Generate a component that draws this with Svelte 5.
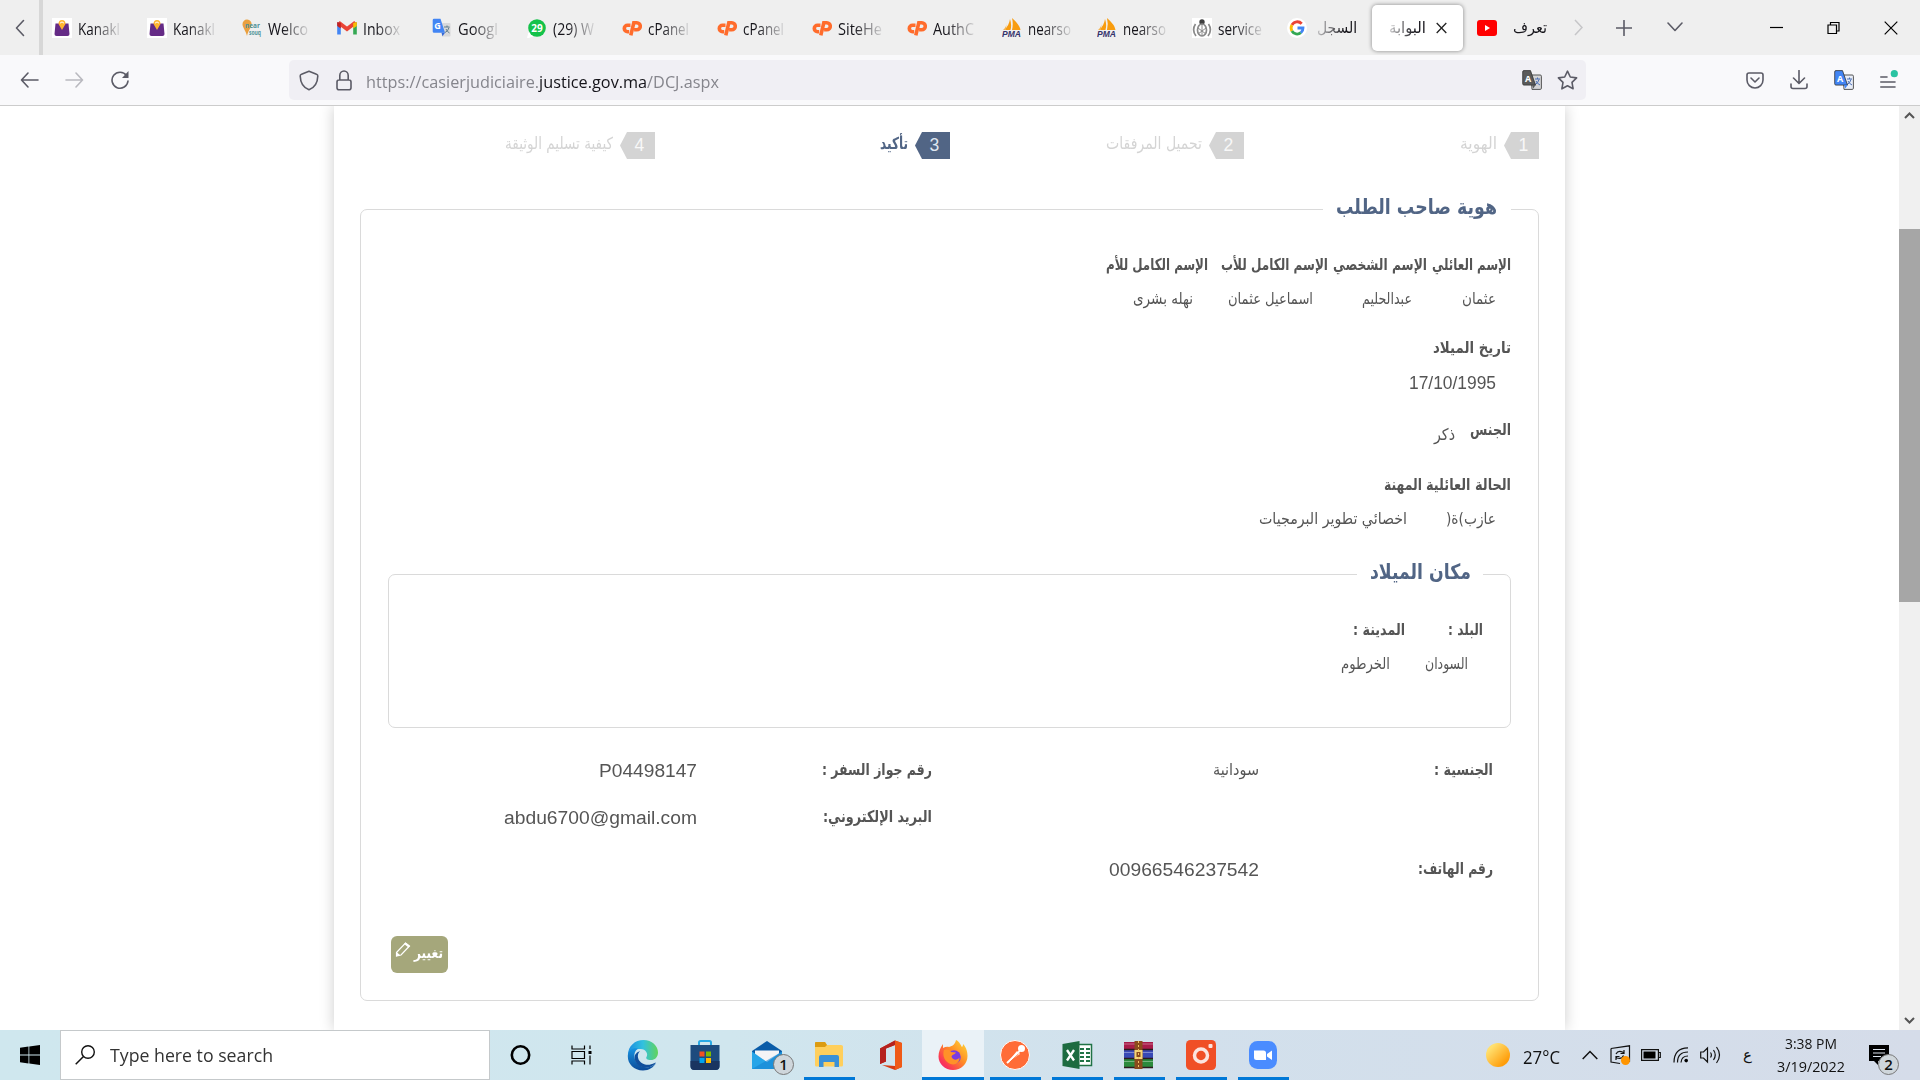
<script>
  // Stretches a line of text horizontally so it fills the given width.
  function fit(node, width) {
    const natural = node.getBoundingClientRect().width;
    if (natural > 0) {
      node.style.transform = `scaleX(${width / natural})`;
      node.style.marginRight = `${width - natural}px`;
    }
  }

  const tabs = [
    { icon: 'bag', title: 'Kanakl', w: 42 },
    { icon: 'bag', title: 'Kanakl', w: 42 },
    { icon: 'near', title: 'Welco', w: 40 },
    { icon: 'gmail', title: 'Inbox', w: 37 },
    { icon: 'translate', title: 'Googl', w: 40 },
    { icon: 'whatsapp', title: '(29) W', w: 41 },
    { icon: 'cp', title: 'cPanel', w: 41 },
    { icon: 'cp', title: 'cPanel', w: 41 },
    { icon: 'cp', title: 'SiteHe', w: 44 },
    { icon: 'cp', title: 'AuthC', w: 41 },
    { icon: 'pma', title: 'nearso', w: 43 },
    { icon: 'pma', title: 'nearso', w: 43 },
    { icon: 'crest', title: 'service', w: 44 }
  ];

  const steps = [
    { n: 1, label: 'الهوية', w: 37 },
    { n: 2, label: 'تحميل المرفقات', w: 96 },
    { n: 3, label: 'تأكيد', w: 28, active: true },
    { n: 4, label: 'كيفية تسليم الوثيقة', w: 108 }
  ];

  const names = [
    { label: 'الإسم العائلي', lw: 79, value: 'عثمان', vw: 34 },
    { label: 'الإسم الشخصي', lw: 94, value: 'عبدالحليم', vw: 50 },
    { label: 'الإسم الكامل للأب', lw: 107, value: 'اسماعيل عثمان', vw: 85 },
    { label: 'الإسم الكامل للأم', lw: 102, value: 'نهله بشرى', vw: 60 }
  ];

  const status = [
    { label: 'الحالة العائلية', lw: 85, value: 'عازب)ة(', vw: 50 },
    { label: 'المهنة', lw: 38, value: 'اخصائي تطوير البرمجيات', vw: 148 }
  ];

  const birth = [
    { label: 'البلد :', lw: 35, value: 'السودان', vw: 43 },
    { label: 'المدينة :', lw: 52, value: 'الخرطوم', vw: 49 }
  ];

  const apps = [
    { id: 'edge' },
    { id: 'store' },
    { id: 'mail' },
    { id: 'files', open: true },
    { id: 'office' },
    { id: 'firefox', open: true, active: true },
    { id: 'postman', open: true },
    { id: 'excel', open: true },
    { id: 'winrar', open: true },
    { id: 'recorder', open: true },
    { id: 'zoom', open: true }
  ];
</script>

{#snippet line(text, w, cls)}
  <span class="line {cls}" style:width="{w}px"><span class="ink" dir="auto" use:fit={w}>{text}</span></span>
{/snippet}

{#snippet translateIcon(front, back)}
  <svg width="20" height="20" viewBox="0 0 20 20">
    <path d="M9 5h9.2a1.2 1.2 0 0 1 1.2 1.2v12a1.2 1.2 0 0 1-1.2 1.2H10z" fill={back} stroke="#555" stroke-width="1" />
    <path d="M13 9h5M15.5 7.500v1.500M17 9.500q-1 4-4 5M14 11q1 2.500 4 4" fill="none" stroke="#4b6fb5" stroke-width="1" />
    <path d="M2 .6h6.500l5 14.500H2A1.300 1.300 0 0 1 .7 13.800V2A1.300 1.300 0 0 1 2 .6z" fill={front} stroke="#333" stroke-width=".8" />
    <path d="M10 15.100h3.600l-2.200 3.500z" fill={front} />
    <text x="3" y="11.500" class="mini">A</text>
  </svg>
{/snippet}

{#snippet tabIcon(id)}
  <svg class="fav" width="20" height="20" viewBox="0 0 20 20">
    {#if id === 'bag'}
      <rect width="20" height="20" fill="#fff" />
      <path d="M3.500 5.500h13L17.500 16q0 2-2 2h-11q-2 0-2-2z" fill="#652b86" />
      <path d="M6.500 6a3.500 4 0 0 1 7 0l-3.500 6z" fill="#ffb52e" />
      <path d="M8 5.200q2-2.600 4 0" fill="none" stroke="#fff" />
    {:else if id === 'near'}
      <path d="M5 1.500a4.500 4.500 0 0 0-4.500 4.700C.5 9.500 4 13 5 18c1-5 4-8 4.500-11A4.500 4.500 0 0 0 5 1.500z" fill="#eaa03e" />
      <text x="3" y="9.500" class="near">near</text>
      <text x="7" y="17" class="near" textLength="12" lengthAdjust="spacingAndGlyphs">souq</text>
    {:else if id === 'gmail'}
      <path d="M2 4.500v12" stroke="#4285f4" stroke-width="3.600" />
      <path d="M18 4.500v12" stroke="#34a853" stroke-width="3.600" />
      <path d="M1.500 4.500 10 11l8.500-6.500" fill="none" stroke="#ea4335" stroke-width="4" />
      <path d="M.2 4v4l3.600 2.500V5z" fill="#c5221f" />
      <path d="M19.800 4v4l-3.600 2.500V5z" fill="#fbbc04" />
    {:else if id === 'translate'}
      <path d="M9 5h8.500a1 1 0 0 1 1 1v11.500a1 1 0 0 1-1 1H10z" fill="#d8d8da" />
      <path d="M12 9h5.500M15 7.500V9M17 9.500q-1 4-4 5M14 11q1 2.500 3.500 4" fill="none" stroke="#607d8b" />
      <path d="M2 .8h6.500l4.500 14H2a1.300 1.300 0 0 1-1.300-1.300V2A1.300 1.300 0 0 1 2 .8z" fill="#4285f4" />
      <path d="M9.500 14.800H13l-2.500 3.500z" fill="#3367d6" />
      <text x="2.200" y="11" class="mini">G</text>
    {:else if id === 'whatsapp'}
      <path d="M.5 19.800 2 14.500 6.500 18z" fill="#fff" stroke="#fff" />
      <circle cx="10" cy="10" r="8.800" fill="#14c24a" />
      <text x="4.300" y="13.600" class="wa">29</text>
    {:else if id === 'cp'}
      <g fill="none" stroke="#ff6c2c" stroke-width="3.600">
        <path d="M8.500 7.300H5.500a3.200 3.200 0 0 0 0 6.400h1.700" />
        <path d="M8.800 17.300 11.800 4.800h3a3.500 3.500 0 0 1 0 7h-2.700" />
      </g>
    {:else if id === 'pma'}
      <path d="M8 1q2 6 .5 11H2q5-4 6-11zM10 0q8 7 8.500 12H10q1.500-6 0-12z" fill="#f89c0e" />
      <path d="M4.500 5q0 4-3.500 7h3z" fill="#f6b34c" />
      <text x="0" y="19" class="pma">PMA</text>
    {:else if id === 'crest'}
      <rect width="20" height="20" fill="#fff" />
      <circle cx="10" cy="4" r="2.700" fill="#3f3f3f" />
      <g fill="none" stroke="#8a8a8a">
        <ellipse cx="10" cy="12" rx="4.500" ry="6" stroke-width="1.700" />
        <path d="M10 6v12M6 10l8 6M14 10l-8 6" />
        <path d="M3.500 6q-4 6 .5 12M16.500 6q4 6-.5 12" stroke-width="1.700" />
      </g>
    {/if}
  </svg>
{/snippet}

{#snippet appIcon(id)}
  <svg width="32" height="32" viewBox="0 0 32 32">
    {#if id === 'edge'}
      <defs>
        <linearGradient id="edgeTop" x1="0" x2="1"><stop offset="0" stop-color="#1c8de0" /><stop offset=".5" stop-color="#32c1df" /><stop offset="1" stop-color="#62d45a" /></linearGradient>
        <linearGradient id="edgeLow" x1="0" x2="0" y1="0" y2="1"><stop offset="0" stop-color="#1793e0" /><stop offset="1" stop-color="#0c4a98" /></linearGradient>
      </defs>
      <path d="M1 16C1 7 8 1 16.500 1 25 1 31 7 31 13.500c0 5-3.500 7.500-7 7.500-4 0-5.500-1.500-4.500-3 2-3-.5-8-6-8C7 10 2.500 12.500 1 18z" fill="url(#edgeTop)" />
      <path d="M.8 17C1 11 6 8.500 11 9.500c-3 2-4 5-3.500 9 .8 6 7 11 15 9.500q4-1 6.500-4c-2 4-7 7.500-13 7.500C7 31.500.6 25 .8 17z" fill="url(#edgeLow)" />
      <path d="M13 12c-3 3-3 8 1 11.500 4 3 9 3 13.500.5l1.500-.5c-2 3-6 5-10 5C11 28.500 6 22 8 16q1.500-3 5-4z" fill="#114f9c" />
    {:else if id === 'store'}
      <path d="M10 8V3.500q0-1.500 1.500-1.500h9Q22 2 22 3.500V8" fill="none" stroke="#29a9e5" stroke-width="2" />
      <path d="M1.500 6h29v21q0 4-4 4h-21q-4 0-4-4z" fill="#1d4b7e" />
      <path d="M1.500 22h29v5q0 4-4 4h-21q-4 0-4-4z" fill="#1a3560" />
      <path d="M10.500 12.500h5v5h-5z" fill="#f25022" /><path d="M17 12.500h5v5h-5z" fill="#7fba00" />
      <path d="M10.500 19h5v5h-5z" fill="#00a4ef" /><path d="M17 19h5v5h-5z" fill="#ffb900" />
    {:else if id === 'mail'}
      <path d="M1 12 16 2l15 10v18H1z" fill="#0a5ca8" />
      <path d="M4 11.500h24V20l-12 5-12-5z" fill="#f4f4f6" />
      <path d="M1 12.500 16 23l15-10.500V30H1z" fill="#27a5e8" />
      <path d="M1 30 31 12.500V30z" fill="#1684d2" opacity=".6" />
    {:else if id === 'files'}
      <path d="M2 4q0-1 1-1h9l2 3h14q2 0 2 1.500V26q0 1.500-1.500 1.500h-25Q2 27.500 2 26z" fill="#ffcf5c" />
      <path d="M2 4q0-1 1-1h9l2 3-2 2H2z" fill="#dc9b11" />
      <path d="M6 28V18q0-2 2-2h16q2 0 2 2v10h-4.500v-5h-11v5z" fill="#3a91d8" />
    {:else if id === 'office'}
      <path d="M5 9.500 20 1.500l7 2.500v24l-7 3-13-5 13 1V6l-9 3.500v13L5 25z" fill="#d83b12" />
      <path d="M20 1.500 27 4v24l-7 3z" fill="#ef5a17" />
      <path d="M5 9.500 20 1.500V6l-9 3.500v13L5 25z" fill="#b5221f" />
    {:else if id === 'firefox'}
      <defs>
        <linearGradient id="foxBody" x1="1" x2="0" y1="0" y2="1"><stop offset="0" stop-color="#ffdf3a" /><stop offset=".45" stop-color="#ff8a26" /><stop offset=".8" stop-color="#fa3359" /><stop offset="1" stop-color="#e42585" /></linearGradient>
      </defs>
      <path d="M19 1c4 2 5 6 6 7 1-1 1-2 1-3 4 4 4.500 9 4.500 12 0 8-6.500 14-14.500 14S1.500 25 1.500 17.500c0-5 2-9 4.500-12.500v4c2-1 4-1.500 6-1 4-1 6-3 7-7z" fill="url(#foxBody)" />
      <circle cx="17" cy="18" r="6.800" fill="#7a3be2" />
      <path d="M7 11c4-1 6 0 7 2l5 .5c-1 2-4 2-4.500 4 1 4 6 4 8 1 0 6-5 8-9 6.500C8 23 5 17 7 11z" fill="#ff9128" />
    {:else if id === 'postman'}
      <circle cx="16" cy="16" r="14.500" fill="#ff6c37" stroke="#fff" />
      <path d="M8 24 18 12l3 3z" fill="#fff" />
      <path d="m8 24 11-10M18.500 14.500l4-5" stroke="#fff" stroke-width="2" />
      <circle cx="22.500" cy="9.500" r="3.500" fill="#fff" />
      <path d="m11 23 8.500-8" stroke="#ff6c37" />
    {:else if id === 'excel'}
      <path d="M17 5.500h13.500v21H17z" fill="#fff" stroke="#217346" stroke-width="1.500" />
      <path d="M19 10h4M25 10h4M19 14h4M25 14h4M19 18h4M25 18h4M19 22h4M25 22h4" stroke="#217346" stroke-width="2" />
      <path d="M1.500 5 18.500 2v28L1.500 27z" fill="#1d6b40" />
      <path d="m6 11 7 10.500M13 11 6 21.500" stroke="#fff" stroke-width="2.300" />
    {:else if id === 'winrar'}
      <path d="M1 3h29v8H1z" fill="#a81b4a" /><path d="M1 11h29v9H1z" fill="#3849b5" /><path d="M1 20h29v9H1z" fill="#2b8a3c" />
      <path d="M1 5h29M1 13.500h29M1 22.500h29" stroke="#fff" opacity=".35" />
      <path d="M1 10.500h29M1 19.500h29M1 28.500h29" stroke="#2c1a1f" stroke-width="1.300" />
      <path d="M11.500 2h8v28h-8z" fill="#8a4b1d" /><path d="M12.500 12h6v7h-6z" fill="none" stroke="#f4d576" stroke-width="2" />
      <path d="M15.500 2v28" stroke="#f0c060" stroke-dasharray="2 2" />
    {:else if id === 'recorder'}
      <rect x="1" y="1" width="30" height="30" rx="4.500" fill="#f04f26" />
      <circle cx="16" cy="16.500" r="6.500" fill="none" stroke="#fbe4df" stroke-width="3.500" />
      <rect x="23.500" y="5" width="4" height="4" rx="1" fill="#fbe4df" />
    {:else if id === 'zoom'}
      <rect x="2" y="2" width="28" height="28" rx="8.500" fill="#4a8cff" />
      <path d="M7 11.500h9.500q2.500 0 2.500 2.500v7H9.500Q7 21 7 18.500zM20 15l5-3.500v9.500l-5-3.500z" fill="#fff" />
    {/if}
  </svg>
{/snippet}

<div class="screen">
  <header class="tabbar">
    <div class="scroll-left">
      <svg width="10" height="18" viewBox="0 0 10 18"><path d="M8.500 1.500 1.500 9l7 7.500" class="stroke" /></svg>
    </div>
    <div class="tabs">
      {#each tabs as tab}
        <div class="tab">
          {@render tabIcon(tab.icon)}
          <span class="fade">{@render line(tab.title, tab.w, 'ui')}</span>
        </div>
      {/each}
    </div>
    <div class="tab google">
      <svg width="20" height="20" viewBox="0 0 20 20">
        <circle cx="10" cy="10" r="10" fill="#fff" />
        <g fill="none" stroke-width="2.800">
          <path d="M14.700 5.800A6 6 0 0 0 4.900 7" stroke="#ea4335" />
          <path d="M4.900 7a6.300 6.300 0 0 0 0 6" stroke="#fbbc05" />
          <path d="M4.900 13a6 6 0 0 0 9 1.700" stroke="#34a853" />
          <path d="M13.900 14.700A6 6 0 0 0 16 10h-5.500" stroke="#4285f4" />
        </g>
      </svg>
      <span class="fade-rtl">{@render line('السجل', 40, 'tab-ar')}</span>
    </div>
    <div class="active-tab">
      <span class="fade-rtl">{@render line('البوابة', 37, 'tab-ar')}</span>
      <svg width="11" height="12" viewBox="0 0 11 12"><path d="m.7 1 9.600 10M10.300 1 .7 11" stroke="#222" stroke-width="1.300" /></svg>
    </div>
    <div class="tab youtube">
      <svg width="20" height="18" viewBox="0 0 20 18"><rect y="1" width="20" height="16" rx="3" fill="#f00" /><path d="m8 6 5 3-5 3z" fill="#fff" /></svg>
      {@render line('تعرف', 34, 'tab-ar')}
    </div>
    <div class="strip-tools">
      <svg width="9" height="17" viewBox="0 0 9 17"><path d="m1 1 7 7.500L1 16" fill="none" stroke="#c6c6c8" stroke-width="1.500" /></svg>
      <svg class="plus" width="16" height="16" viewBox="0 0 16 16"><path d="M8 .5v15M.5 8h15" class="stroke" /></svg>
      <svg class="more" width="16" height="10" viewBox="0 0 16 10"><path d="m1 1 7 7.500L15 1" class="stroke" /></svg>
    </div>
    <div class="window-tools">
      <svg width="14" height="14" viewBox="0 0 14 14"><path d="M0 6.500h13" stroke="#000" stroke-width="1.200" /></svg>
      <svg width="14" height="14" viewBox="0 0 14 14"><path d="M1 4h8.500v8.500H1zM3.500 4V1.500H12V10H9.500" fill="none" stroke="#000" stroke-width="1.200" /></svg>
      <svg width="14" height="14" viewBox="0 0 14 14"><path d="m.7.7 12.600 12.600M13.300.7.7 13.300" stroke="#000" stroke-width="1.200" /></svg>
    </div>
  </header>

  <nav class="toolbar">
    <div class="nav-icons">
      <svg width="19" height="18" viewBox="0 0 19 18"><path d="M18 9H1.500M8 2 1.500 9 8 16" class="stroke" /></svg>
      <svg class="dim" width="19" height="18" viewBox="0 0 19 18"><path d="M1 9h16.500M11 2l6.500 7-6.500 7" class="stroke" /></svg>
      <svg width="20" height="20" viewBox="0 0 20 20"><path d="M16.500 5.500A8 8 0 1 0 18 11" class="stroke" /><path d="M18.500 1v7H12z" fill="#5b5b66" /></svg>
    </div>
    <div class="urlbar">
      <svg width="20" height="21" viewBox="0 0 20 21"><path d="M10 1.200 2.500 4.200Q1.200 4.600 1.200 6C1.400 12.500 4 17.500 10 19.800c6-2.300 8.600-7.300 8.800-13.800q0-1.400-1.300-1.800z" class="stroke" /></svg>
      <svg class="lock" width="16" height="21" viewBox="0 0 16 21"><path d="M3.800 10V5.500a4.200 4.500 0 0 1 8.400 0V10M3 10h10a2 2 0 0 1 2 2v5.700a2 2 0 0 1-2 2H3a2 2 0 0 1-2-2V12a2 2 0 0 1 2-2z" class="stroke" /></svg>
      <span class="line url" style:width="353px"><span class="ink" use:fit={353}>https://casierjudiciaire.<b>justice.gov.ma</b>/DCJ.aspx</span></span>
      <span class="url-actions">
        {@render translateIcon('#5a5a5a', '#d4d4d6')}
        <svg width="21" height="20" viewBox="0 0 21 20"><path d="m10.500 1.200 2.800 5.800 6.300.9-4.600 4.500 1.100 6.400-5.600-3-5.600 3L6 12.400 1.400 7.900l6.300-.9z" class="stroke" /></svg>
      </span>
    </div>
    <div class="ext-icons">
      <svg width="18" height="17" viewBox="0 0 18 17"><path d="M3 1h12a2 2 0 0 1 2 2v5a8 8 0 0 1-16 0V3a2 2 0 0 1 2-2zM5 6l4 4 4-4" class="stroke" /></svg>
      <svg width="18" height="20" viewBox="0 0 18 20"><path d="M9 .5V13M3.500 8 9 13.500 14.500 8M1 14v2.500q0 2 2 2h12q2 0 2-2V14" class="stroke" /></svg>
      {@render translateIcon('#4285f4', '#e9eef8')}
      <svg width="18" height="20" viewBox="0 0 18 20"><path d="M.8 7H7M.8 12H15M.8 17H15" class="stroke" /><circle cx="14.300" cy="3.700" r="3.600" fill="#2ac3a2" /></svg>
    </div>
  </nav>

  <div class="viewport">
    <main class="page" dir="rtl">
      <ol class="steps">
        {#each steps as step}
          <li class:current={step.active}>
            <span class="flag">{step.n}</span>
            {@render line(step.label, step.w, 'step-label')}
          </li>
        {/each}
      </ol>

      <fieldset class="owner">
        <legend>{@render line('هوية صاحب الطلب', 161, 'title')}</legend>

        <div class="grid names">
          {#each names as f}<div>{@render line(f.label, f.lw, 'label')}</div>{/each}
          {#each names as f}<div class="value">{@render line(f.value, f.vw, 'val')}</div>{/each}
        </div>

        <div class="date">
          <div class="row">{@render line('تاريخ الميلاد', 78, 'label')}</div>
          <div class="row value">{@render line('17/10/1995', 87, 'num')}</div>
        </div>

        <div class="row gender">
          {@render line('الجنس', 41, 'label')}
          {@render line('ذكر', 21, 'val lower')}
        </div>

        <div class="grid status">
          {#each status as f}<div>{@render line(f.label, f.lw, 'label')}</div>{/each}
          {#each status as f}<div class="value">{@render line(f.value, f.vw, 'val')}</div>{/each}
        </div>

        <fieldset class="birth">
          <legend>{@render line('مكان الميلاد', 101, 'title')}</legend>
          <div class="grid place">
            {#each birth as f}<div>{@render line(f.label, f.lw, 'label')}</div>{/each}
            {#each birth as f}<div class="value">{@render line(f.value, f.vw, 'val')}</div>{/each}
          </div>
        </fieldset>

        <div class="contact first">
          <div>{@render line('الجنسية :', 59, 'label')}</div>
          <div>{@render line('سودانية', 46, 'val')}</div>
          <div>{@render line('رقم جواز السفر :', 110, 'label')}</div>
          <div>{@render line('P04498147', 98, 'num big')}</div>
        </div>
        <div class="contact second">
          <div></div>
          <div></div>
          <div>{@render line('البريد الإلكتروني:', 109, 'label')}</div>
          <div>{@render line('abdu6700@gmail.com', 193, 'num big')}</div>
        </div>
        <div class="contact third">
          <div>{@render line('رقم الهاتف:', 75, 'label')}</div>
          <div>{@render line('00966546237542', 150, 'num big')}</div>
        </div>

        <div class="actions">
          <button type="button">
            {@render line('تغيير', 29, 'btn-text')}
            <svg width="16" height="16" viewBox="0 0 16 16"><path d="M1.500 11.500 10.500 2l4 3-8.500 9-4.500 1z" fill="none" stroke="#fff" stroke-width="1.200" /><path d="m10.500 1.500 4.500 3.500-1.500 1.500L9 3zM1.500 11l3.500 3-4 1.500z" fill="#fff" /></svg>
          </button>
        </div>
      </fieldset>
    </main>

    <div class="scrollbar">
      <svg width="11" height="7" viewBox="0 0 11 7"><path d="m1 6 4.500-4.500L10 6" fill="none" stroke="#555" stroke-width="2" /></svg>
      <div class="thumb"></div>
      <svg width="11" height="7" viewBox="0 0 11 7"><path d="m1 1 4.500 4.500L10 1" fill="none" stroke="#555" stroke-width="2" /></svg>
    </div>
  </div>

  <footer class="taskbar">
    <div class="start">
      <svg width="20" height="20" viewBox="0 0 20 20"><path d="M0 2.800 8.500 1.600v8H0zM9.300 1.500 20 0v9.600H9.300zM0 10.400h8.500v8L0 17.200zM9.300 10.400H20V20L9.300 18.500z" /></svg>
    </div>
    <div class="search">
      <svg width="20" height="20" viewBox="0 0 20 20"><circle cx="13" cy="7" r="6.300" fill="none" stroke="#111" stroke-width="1.400" /><path d="M8.500 11.500.7 19.300" stroke="#111" stroke-width="1.500" /></svg>
      {@render line('Type here to search', 163, 'search-text')}
    </div>
    <div class="app narrow"><svg width="22" height="22" viewBox="0 0 22 22"><circle cx="10.500" cy="11" r="8.700" fill="none" stroke="#000" stroke-width="2.600" /></svg></div>
    <div class="app narrow"><svg width="22" height="20" viewBox="0 0 22 20"><path d="M1 .5V4h12.500V.5M1 6.500h12.500v7H1zM1 19.500V16h12.500v3.500M19 .5V4M19 10.500v9" fill="none" stroke="#000" stroke-width="1.200" /><path d="M17.500 6h3v3h-3z" /></svg></div>
    {#each apps as app}
      <div class="app" class:open={app.open} class:active={app.active}>
        {@render appIcon(app.id)}
        {#if app.id === 'mail'}<span class="badge mail-badge">1</span>{/if}
      </div>
    {/each}
    <div class="tray">
      <span class="sun"></span>
      {@render line('27°C', 37, 'temp')}
      <svg class="t-chev" width="16" height="10" viewBox="0 0 16 10"><path d="M.7 9 8 1.500 15.300 9" fill="none" stroke="#111" stroke-width="1.500" /></svg>
      <svg class="t-sync" width="21" height="21" viewBox="0 0 21 21"><path d="M1 3.500 19.500.8v16M1 3.500V17l9 1.500" fill="none" stroke="#111" stroke-width="1.200" /><path d="M6 9q2-4 6.500-2l1.500 1M14 5v3.500h-3.500M13.500 10.500q-1.500 4-6.500 2.500L6 12M6 15v-3.500h3.500" fill="none" stroke="#111" stroke-width="1.200" /><circle cx="15.500" cy="15.500" r="4.500" fill="#ff9500" /></svg>
      <svg class="t-bat" width="20" height="12" viewBox="0 0 20 12"><path d="M.6.6h16.800v10.800H.6zM17.500 3.500h1.800v5h-1.800" fill="none" stroke="#111" stroke-width="1.200" /><path d="M2.500 2.500h12v7h-12z" /></svg>
      <svg class="t-wifi" width="16" height="16" viewBox="0 0 16 16"><g fill="none" stroke="#111" stroke-width="1.200"><path d="M1 15.500Q1 1 15 .8" /><path d="M4.500 15.500Q4.500 5 15 5" /><path d="M8 15.500Q8.500 9 15 9" /></g><circle cx="13.200" cy="13.600" r="1.800" /></svg>
      <svg class="t-vol" width="21" height="18" viewBox="0 0 21 18"><path d="M.7 6H3.500L7.500 2v14l-4-4H.7zM10.500 6.500q1.800 2.500 0 5M13.500 4q3.500 5 0 10M16.500 1q6 8 0 16" fill="none" stroke="#111" stroke-width="1.200" /></svg>
      <span class="lang">ع</span>
      <div class="clock">
        {@render line('3:38 PM', 52, 'time')}
        {@render line('3/19/2022', 68, 'time')}
      </div>
      <div class="notes">
        <svg width="20" height="20" viewBox="0 0 20 20"><path d="M0 0h20v16H9v4l-4-4H0z" /><path d="M4 4.500h12M4 8h12M4 11.500h8" stroke="#dbe2ec" stroke-width="1.200" /></svg>
        <span class="badge note-badge">2</span>
      </div>
    </div>
  </footer>
</div>

<style>
  :global(body) { margin: 0; overflow: hidden; }
  * { box-sizing: border-box; }
  svg { display: block; flex: none; }
  .stroke { fill: none; stroke: #5b5b66; stroke-width: 1.6; stroke-linecap: round; stroke-linejoin: round; }

  .screen {
    width: 1920px; height: 1080px; display: flex; flex-direction: column; overflow: hidden;
    background: #fff; font-family: "Open Sans", "Noto Sans", "DejaVu Sans", sans-serif;
  }

  .line { display: inline-block; flex: none; white-space: nowrap; direction: ltr; }
  .ink { display: inline-block; transform-origin: 0 50%; }

  /* Tab strip */
  .tabbar { height: 55px; flex: none; background: #efefef; display: flex; align-items: center; }
  .scroll-left { width: 43px; height: 55px; padding-left: 15px; display: flex; align-items: center; border-right: 4px solid #d7d7d7; }
  .tabs { display: flex; padding-left: 9px; }
  .tab { display: flex; align-items: center; width: 95px; gap: 6px; height: 20px; }
  .ui { font-size: 15.5px; line-height: 22px; color: #15141a; position: relative; top: 1px; }
  .fade { -webkit-mask-image: linear-gradient(90deg, #000 35%, transparent 108%); mask-image: linear-gradient(90deg, #000 35%, transparent 108%); display: flex; }
  .fade-rtl { -webkit-mask-image: linear-gradient(270deg, #000 30%, transparent 120%); mask-image: linear-gradient(270deg, #000 30%, transparent 120%); display: flex; }
  .tab-ar { font: 15.500px/24px "DejaVu Sans", sans-serif; color: #15141a; }
  .google { width: 84px; gap: 10px; }
  .active-tab {
    width: 91px; height: 46px; margin-left: 1px; background: #fff; border-radius: 5px; display: flex; align-items: center;
    justify-content: flex-end; gap: 10px; padding-right: 16px; box-shadow: 0 0 4px rgba(0, 0, 0, .45);
  }
  .youtube { width: 84px; padding-left: 14px; gap: 16px; }
  .strip-tools { display: flex; align-items: center; padding-left: 27px; }
  .plus { margin-left: 33px; }
  .more { margin-left: 35px; margin-top: -2px; }
  .window-tools { margin-left: auto; padding-right: 22px; display: flex; gap: 43px; }

  .near { font: 700 6.500px "Open Sans", sans-serif; fill: #4f9297; }
  .mini { font: 700 9px "Open Sans", sans-serif; fill: #fff; }
  .wa { font: 700 10px "Open Sans", sans-serif; fill: #fff; }
  .pma { font: italic 700 8.500px "Liberation Sans", sans-serif; fill: #34326b; }

  /* Address bar */
  .toolbar { height: 51px; flex: none; background: #f9f9fb; border-bottom: 1px solid #ccc; display: flex; align-items: center; padding: 0 22px 0 20px; }
  .nav-icons { width: 269px; display: flex; gap: 26px; align-items: center; }
  .dim { opacity: .4; }
  .urlbar { width: 1297px; height: 40px; background: #f0eff4; border-radius: 5px; display: flex; align-items: center; padding: 0 8px 0 10px; }
  .lock { margin-left: 17px; }
  .url { margin: 3px 0 0 14px; font-size: 17px; line-height: 22px; color: #85858c; }
  .url b { font-weight: 400; color: #15141a; }
  .url-actions { margin-left: auto; display: flex; gap: 15px; }
  .ext-icons { margin-left: auto; display: flex; align-items: center; gap: 26px; }

  /* Page */
  .viewport { height: 924px; flex: none; display: flex; justify-content: space-between; background: #fff; overflow: hidden; }
  .page {
    width: 1231px; margin-left: 334px; padding: 26px 26px 0; background: #fff; box-shadow: 0 0 14px rgba(0, 0, 0, .2);
    color: #555; clip-path: inset(0 -20px);
  }
  .steps { list-style: none; margin: 0; padding: 0; height: 27px; display: grid; grid-template-columns: 295px 294px 295px 295px; }
  .steps li { display: flex; align-items: center; gap: 7px; color: #d4d4d4; }
  .flag {
    width: 35px; height: 27px; background: #d4d4d4; color: #f8f8f8; font: 17.6px/26px "Liberation Sans", sans-serif;
    text-align: center; padding-left: 4px; clip-path: polygon(7px 0, 100% 0, 100% 100%, 7px 100%, 0 50%);
  }
  .current .flag { background: #516585; color: #dfe5ef; }
  .step-label { font: 16.500px/22px "DejaVu Sans", sans-serif; margin-top: -3px; }
  .current .step-label { font-weight: 700; color: #516585; }

  fieldset { margin: 0; min-width: 0; border: 1px solid #dadada; border-radius: 7px; padding: 0 27px; }
  legend { height: 29px; line-height: 27px; }
  .owner { margin-top: 36px; height: 806px; }
  .owner > legend { padding: 0 14px 0 13px; }
  .title { font: 700 21px/25px "DejaVu Sans", sans-serif; color: #516585; }
  .label { font: 700 16px/22px "DejaVu Sans", sans-serif; margin-top: -1px; }
  .val { font: 16px/22px "DejaVu Sans", sans-serif; margin-top: -1px; }
  .num { font: 17.6px/22px "Liberation Sans", sans-serif; margin-top: 1px; }
  .num.big { font-size: 19.2px; }

  .grid { display: grid; grid-auto-rows: 34px; }
  .grid > div, .row, .contact > div { display: flex; align-items: center; min-width: 0; }
  .value { padding-right: 15px; }
  .row { height: 34px; }
  .names { margin-top: 24px; grid-template-columns: 84px 99px 120px 120px; }
  .date { margin-top: 15px; }
  .gender { margin-top: 14px; gap: 15px; }
  .lower { margin-top: 9px; }
  .status { margin-top: 21px; grid-template-columns: 89px 180px; }
  .birth { margin-top: 24px; height: 168px; }
  .birth > legend { padding: 0 12px 0 13px; }
  .place { margin-top: 24px; grid-template-columns: 78px 100px; }
  .contact { height: 34px; padding-right: 18px; display: grid; grid-template-columns: 234px 327px 235px 200px; }
  .first { margin-top: 25px; }
  .second { margin-top: 13px; }
  .third { margin-top: 18px; }
  .actions { margin-top: 50px; display: flex; justify-content: flex-end; padding-left: 3px; }
  button { width: 57px; height: 37px; border: 0; border-radius: 6px; background: #a5a77b; color: #fff; padding: 5px 5px 0 4px; display: flex; align-items: flex-start; justify-content: space-between; }
  .btn-text { font: 700 15px/20px "DejaVu Sans", sans-serif; margin-top: 2px; }

  .scrollbar { width: 21px; background: #f0f0f0; display: flex; flex-direction: column; align-items: center; padding: 6px 0; }
  .thumb { width: 21px; height: 373px; background: #a6a6a6; margin: 110px 0 auto; }

  /* Taskbar */
  .taskbar { height: 50px; flex: none; display: flex; align-items: stretch; background: linear-gradient(90deg, #cfe7ee 0, #d0e6ee 38%, #d2e0ec 62%, #d5dce9 100%); }
  .start { width: 60px; display: flex; align-items: center; justify-content: center; }
  .search { width: 430px; background: #fff; border: 1px solid #c5c9cb; display: flex; align-items: center; gap: 15px; padding-left: 14px; }
  .search-text { font-size: 18px; line-height: 24px; color: #333; }
  .app { width: 62px; display: flex; align-items: center; justify-content: center; position: relative; }
  .narrow { width: 61px; }
  .open { background: linear-gradient(#0078d7, #0078d7) center bottom / 51px 3px no-repeat; }
  .active { background: linear-gradient(#0078d7, #0078d7) center bottom / 62px 3px no-repeat, #eaf2f7; }
  .badge { position: absolute; width: 21px; height: 21px; border: 1px solid #777; border-radius: 50%; background: #cfd6db; color: #111; font-size: 15px; font-weight: 600; line-height: 19px; text-align: center; }
  .mail-badge { left: 37px; top: 24px; }
  .tray { margin-left: auto; width: 434px; display: flex; align-items: center; color: #111; }
  .sun { width: 24px; height: 24px; border-radius: 50%; background: linear-gradient(135deg, #ffe070 20%, #ff9d0a 80%); flex: none; }
  .temp { font-size: 17.5px; line-height: 24px; margin-left: 13px; margin-top: 3px; }
  .t-chev { margin-left: 22px; }
  .t-sync { margin-left: 12px; }
  .t-bat { margin-left: 10px; }
  .t-wifi { margin-left: 12px; }
  .t-vol { margin-left: 11px; }
  .lang { width: 10px; margin-left: 22px; font: 15px/20px "DejaVu Sans", sans-serif; }
  .clock { width: 68px; margin-left: 24px; display: flex; flex-direction: column; align-items: center; }
  .time { font-size: 15px; line-height: 23px; }
  .notes { position: relative; margin-left: 24px; }
  .note-badge { left: 9px; top: 9px; }
</style>
